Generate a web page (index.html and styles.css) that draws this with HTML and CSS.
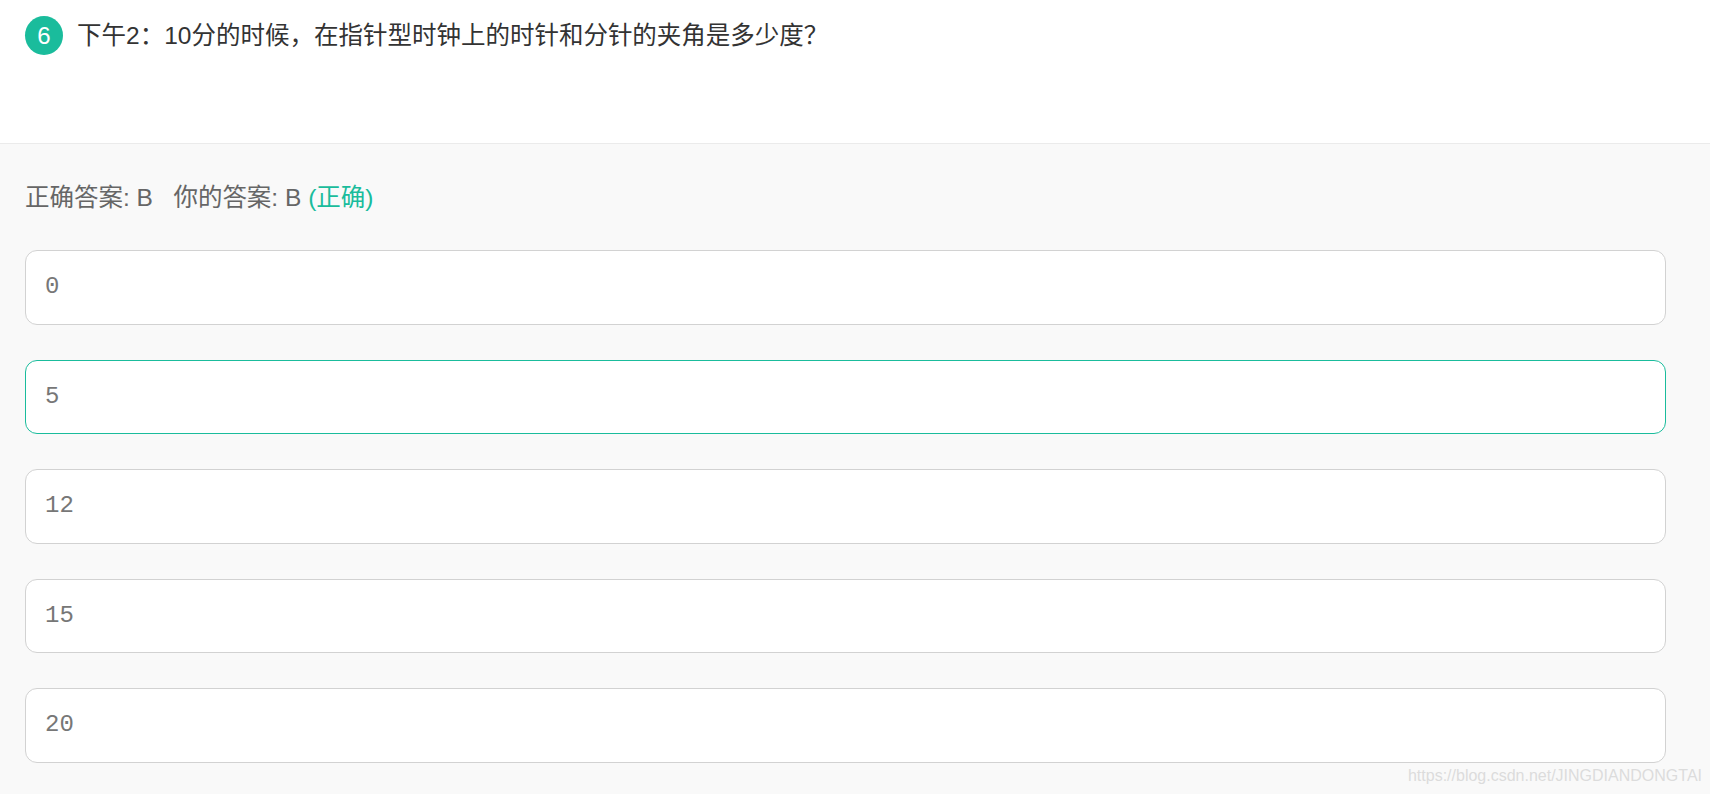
FILE: index.html
```html
<!DOCTYPE html>
<html lang="zh">
<head>
<meta charset="utf-8">
<title>Question 6</title>
<link rel="stylesheet" href="styles.css">
</head>
<body>
<section class="question">
  <span class="badge">6</span>
  <p class="stem">下午2：10分的时候，在指针型时钟上的时针和分针的夹角是多少度？</p>
</section>
<section class="answers">
  <p class="result">正确答案: B&nbsp;&nbsp; 你的答案: B <span class="ok">(正确)</span></p>
  <ul class="options">
    <li class="option">0</li>
    <li class="option correct">5</li>
    <li class="option">12</li>
    <li class="option">15</li>
    <li class="option">20</li>
  </ul>
</section>
<span class="watermark">https://blog.csdn.net/JINGDIANDONGTAI</span>
</body>
</html>
```
FILE: styles.css
```css
* { box-sizing: border-box; }
html, body { margin: 0; padding: 0; height: 794px; overflow: hidden; }
body {
  position: relative;
  background: #fff;
  font-family: "Liberation Sans", "Noto Sans CJK SC", sans-serif;
}
.question {
  height: 144px;
  padding: 16px 25px 0;
  display: flex;
  align-items: flex-start;
  gap: 14px;
  border-bottom: 1px solid #ebebeb;
}
.badge {
  flex: none;
  width: 38px;
  height: 39px;
  border-radius: 50%;
  background: #1abc9c;
  color: #fff;
  font-size: 24px;
  line-height: 39px;
  text-align: center;
}
.stem {
  margin: 2px 0 0;
  font-size: 24.5px;
  line-height: 36px;
  color: #333;
}
.answers {
  height: 650px;
  padding: 36px 44px 0 25px;
  background: #f9f9f9;
}
.result {
  margin: 0;
  font-size: 24.5px;
  line-height: 35px;
  color: #666;
}
.ok { color: #1abc9c; }
.options {
  list-style: none;
  margin: 35px 0 0;
  padding: 0;
  display: flex;
  flex-direction: column;
  gap: 35px;
}
.option {
  height: 74.5px;
  padding: 0 19px;
  border: 1px solid #d2d2d2;
  border-radius: 12px;
  background: #fff;
  color: #777;
  font-family: "Liberation Mono", monospace;
  font-size: 24px;
  line-height: 72px;
}
.option.correct { border-color: #1abc9c; }
.watermark {
  position: absolute;
  right: 8px;
  top: 766px;
  font-size: 16px;
  line-height: 20px;
  color: #dcdcdc;
}
```
